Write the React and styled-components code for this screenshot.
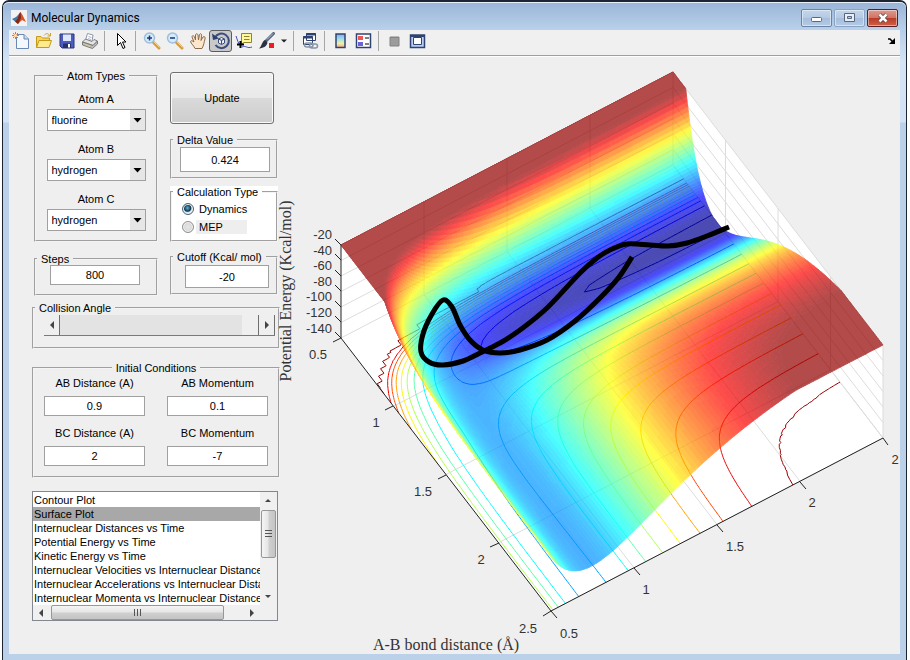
import { useState } from 'react'
import styled, { createGlobalStyle } from 'styled-components'

const GlobalS = createGlobalStyle`
    * { box-sizing: border-box; }
    body {
        margin: 0;
        background: #ffffff;
        font-family: "Liberation Sans", Arial, sans-serif;
        font-size: 11px;
        line-height: 12px;
        color: #000000;
    }
    button, input, select { font: inherit; color: inherit; margin: 0; padding: 0; }
`

/* ---------- window ---------- */

const WindowS = styled.div`
    display: flex;
    flex-direction: column;
    min-height: 100vh;
    margin: 0 3px 0 2px;
    padding: 0 6px 6px;
    background: linear-gradient(180deg, #9ab5d8 0, #b8cfe9 30px, #d5e4f5 60px, #d3e2f4 120px, #bbd0e9 121px);
    border: solid #1c2431;
    border-width: 2px 1px 0 1px;
    border-radius: 7px 7px 0 0;
`
const TitleBarS = styled.header`
    display: flex;
    align-items: center;
    height: 28px;
    margin: 0 -6px;
    padding: 5px 8px 3px 8px;
    background: linear-gradient(180deg, #9ab5d8, #b9d1ea);
    border-radius: 6px 6px 0 0;
    border-top: 1px solid #e8f0fa;
`
const TitleS = styled.h1`
    flex: 1;
    margin: 0 0 0 4px;
    font: 400 12px/16px Roboto, "Open Sans", sans-serif;
`
const CaptionButtonS = styled.button`
    display: flex;
    align-items: center;
    justify-content: center;
    width: 31px;
    height: 18px;
    margin-left: 2px;
    border: 1px solid ${ p => p.$close ? '#5a1f22' : p.$pale ? '#8ba3c4' : '#6b84a6' };
    border-radius: 2px;
    box-shadow: inset 0 0 0 1px rgba(255, 255, 255, .45);
    background: ${ p => p.$close
        ? 'linear-gradient(180deg, #dd9a8e 0, #d07465 48%, #b93a26 50%, #cf6146 100%)'
        : 'linear-gradient(180deg, #c3d5ea 0, #b5cae4 48%, #a5bddb 50%, #b4cbe6 100%)' };
`

/* ---------- toolbar ---------- */

const ToolBarS = styled.div`
    display: flex;
    align-items: center;
    height: 26px;
    padding: 0 2px 3px 0;
    background: #f0f0f0;
    border-bottom: 1px solid #a0a0a0;
`
const ToolS = styled.button`
    display: flex;
    align-items: center;
    justify-content: center;
    width: ${ p => p.$narrow ? '12px' : '23px' };
    height: 22px;
    border: 1px solid ${ p => p.$on ? '#5c5c5c' : 'transparent' };
    border-radius: 3px;
    background: ${ p => p.$on ? '#c9c9c9' : 'none' };
    svg { flex: none; }
`
const DividerS = styled.span`
    width: 1px;
    height: 20px;
    margin: 0 4px 0 3px;
    background: #a6a6a6;
`
const SpacerS = styled.span`
    flex: 1;
`

/* ---------- controls ---------- */

const FigureS = styled.main`
    display: flex;
    flex: 1;
    align-items: flex-start;
    background: #efefef;
    border-top: 1px solid #ffffff;
`
const SideS = styled.div`
    flex: none;
    width: 271px;
    padding: 13px 0 0 23px;
`
const ColumnsS = styled.div`
    display: grid;
    grid-template-columns: 124px 108px;
    column-gap: 12px;
    margin: 0 0 6px 2px;
`
const StackS = styled.div`
    display: flex;
    flex-direction: column;
    padding-top: ${ p => p.$top || 0 }px;
`
const GroupS = styled.fieldset`
    min-width: 0;
    margin: 0;
    padding: 0;
    border: 2px groove #f4f4f4;
`
const GroupWrapS = styled.div`
    margin-bottom: ${ p => p.$after || 0 }px;
    background: ${ p => p.$white ? '#ffffff' : 'none' };
`
const BodyS = styled.div`
    padding: ${ p => p.$pad };
`
const LegendS = styled.legend`
    margin: ${ p => p.$center ? '0 auto' : '0 0 0 1px' };
    padding: 0 4px;
    line-height: 12px;
    white-space: nowrap;
`
const UpdateS = styled.button`
    width: 104px;
    height: 52px;
    margin-bottom: 10px;
    border: 1px solid #707070;
    border-radius: 3px;
    box-shadow: inset 0 0 0 1px #fafafa;
    background: linear-gradient(180deg, #f1f1f1 0, #e9e9e9 49%, #dadada 50%, #cdcdcd 100%);
`
const BoxS = styled.input`
    display: block;
    width: ${ p => p.$width || 100 }px;
    height: ${ p => p.$height || 20 }px;
    border: 1px solid #a0a0a0;
    background: #ffffff;
    text-align: center;
`
const PicksS = styled.div`
    display: grid;
    gap: 12px;
`
const PickS = styled.label`
    text-align: center;
    span { display: block; margin-bottom: 4px; }
`
const SelectWrapS = styled.div`
    position: relative;
    width: 99px;
    margin: 0 auto;
    svg {
        position: absolute;
        right: 1px;
        top: 1px;
        pointer-events: none;
    }
`
const SelectS = styled.select`
    display: block;
    width: 100%;
    height: 22px;
    padding-left: 4px;
    appearance: none;
    border: 1px solid #a0a0a0;
    border-radius: 0;
    background: #ffffff;
`
const RadioS = styled.label`
    display: flex;
    align-items: center;
    height: 18px;
    input {
        appearance: none;
        width: 12px;
        height: 12px;
        margin-right: 2px;
        border: 1px solid #8e8f8f;
        border-radius: 50%;
        background: radial-gradient(#e6e6e6, #cfcfcf);
        box-shadow: inset 0 0 0 1px #f4f4f4;
    }
    input:checked {
        border-color: #4a6478;
        background: radial-gradient(circle at 45% 40%, #58b9dc 0, #12334d 40%, #d8e4ec 55%);
    }
    span {
        width: 51px;
        padding: 1px 3px;
        background: ${ p => p.$shade ? '#eeeeee' : 'none' };
    }
`
const SliderS = styled.div`
    display: flex;
    width: 231px;
    height: 21px;
    border-bottom: 1px solid #7a7a7a;
    background: #e3e3e3;
    input {
        flex: 1;
        min-width: 0;
        appearance: none;
        background: none;
    }
    input::-webkit-slider-thumb {
        appearance: none;
        width: 17px;
        height: 20px;
        border: solid #6f6f6f;
        border-width: 0 1px 0 0;
        background: #efefef;
    }
`
const SliderButtonS = styled.button`
    display: flex;
    align-items: center;
    justify-content: center;
    width: 16px;
    border: solid #6f6f6f;
    border-width: 0 1px 0 0;
    background: #efefef;
`
const FieldsS = styled.div`
    display: grid;
    grid-template-columns: 101px 101px;
    gap: 11px 22px;
    label { text-align: center; }
    label > span { display: block; margin-bottom: 7px; }
    input { width: 100%; }
`

/* ---------- list ---------- */

const ListBoxS = styled.div`
    display: grid;
    grid-template-columns: 1fr 17px;
    grid-template-rows: 113px 15px;
    width: 246px;
    border: 1px solid #828790;
    background: #f0f0f0;
`
const ListS = styled.ul`
    margin: 0;
    padding: 1px 0 0;
    list-style: none;
    overflow: hidden;
    background: #ffffff;
`
const ItemS = styled.li`
    height: 14px;
    padding-left: 1px;
    line-height: 14px;
    white-space: nowrap;
    background: ${ p => p.$on ? '#a8a8a8' : 'none' };
`
const ScrollS = styled.div`
    display: flex;
    flex-direction: ${ p => p.$vertical ? 'column' : 'row' };
    button {
        display: flex;
        flex: none;
        align-items: center;
        justify-content: center;
        border: 0;
        background: none;
        width: 16px;
        height: 16px;
    }
`
const ThumbS = styled.span`
    display: flex;
    align-items: center;
    justify-content: center;
    border: 1px solid #979797;
    border-radius: 2px;
    margin: ${ p => p.$vertical ? '2px 0 auto 1px' : '0 auto 0 2px' };
    width: ${ p => p.$vertical ? '15px' : '173px' };
    height: ${ p => p.$vertical ? '48px' : '15px' };
    background: linear-gradient(${ p => p.$vertical ? '90deg' : '180deg' }, #f5f5f5 0, #e6e6e6 45%, #cfcfcf 55%, #c4c4c4 100%);
`
const PlotS = styled.svg`
    display: block;
    flex: 1;
    min-width: 0;
    height: auto;
    overflow: visible;
    font: 13px "Liberation Sans", Arial, sans-serif;
    fill: #333333;
    .latex { font: 16px "Liberation Serif", "Times New Roman", serif; }
`

/* ---------- LEPS potential, collinear F-H-H ---------- */

const HF = { d: 141.2, b: 2.2187, r: 0.917, s: 0.167 }
const HH = { d: 109.45, b: 1.942, r: 0.742, s: 0.106 }
const V_MIN = -140
const V_MAX = -20

const terms = ({ d, b, r, s }, dist) => {
    const e = Math.exp(-b * (dist - r))
    const k = d / 4 / (1 + s)
    return [k * ((3 + s) * e * e - (2 + 6 * s) * e), k * ((1 + 3 * s) * e * e - (6 + 2 * s) * e)]
}
const energy = (bc, ab) => {
    const [q1, j1] = terms(HF, ab)
    const [q2, j2] = terms(HH, bc)
    const [q3, j3] = terms(HF, ab + bc)
    const mix = ((j1 - j2) ** 2 + (j2 - j3) ** 2 + (j3 - j1) ** 2) / 2
    return Math.min(V_MAX, q1 + q2 + q3 - Math.sqrt(mix))
}
// u runs along B-C, v along A-B, both 0..1 for 0.5..2.5
const heightAt = (u, v) => Math.max(0, (energy(0.5 + 2 * u, 0.5 + 2 * v) - V_MIN) / (V_MAX - V_MIN))
const project = (u, v, h = 0) => [341 + 332 * u + 210 * v, 338 - 173 * u + 273 * v - 93 * h]

const pt = ([x, y]) => `${ x.toFixed(1) } ${ y.toFixed(1) }`
const line = (...points) => 'M' + points.map(pt).join('L')

const jet = t => {
    const k = 0.02 + 0.96 * t
    const ch = c => Math.round(255 * Math.max(0, Math.min(1, 1.5 - Math.abs(4 * k - c))))
    return `rgb(${ ch(3) },${ ch(2) },${ ch(1) })`
}

// the walls are steep at short distances, so the mesh is finer there
const buildSurface = (nu, nv, shades) => {
    const grid = []
    for (let i = 0; i <= nu; i++) {
        grid.push([])
        for (let j = 0; j <= nv; j++) {
            const u = (i / nu) ** 1.5
            const v = (j / nv) ** 1.6
            const h = heightAt(u, v)
            grid[i].push({ h, p: pt(project(u, v, h)) })
        }
    }
    const paths = Array(shades + 1).fill('')
    for (let i = 0; i < nu; i++) {
        for (let j = 0; j < nv; j++) {
            const q = [grid[i][j], grid[i + 1][j], grid[i + 1][j + 1], grid[i][j + 1]]
            const mean = q.reduce((sum, c) => sum + c.h, 0) / 4
            paths[Math.round(mean * shades)] += `M${ q.map(c => c.p).join('L') }Z`
        }
    }
    return paths.map((d, k) => ({ d, color: jet(k / shades) })).filter(b => b.d)
}

// marching over triangles, drawn on the floor of the box
const buildContour = (level, n) => {
    let d = ''
    const cross = (a, b) => {
        if ((a[2] < level) === (b[2] < level)) return null
        const k = (level - a[2]) / (b[2] - a[2])
        return project(a[0] + k * (b[0] - a[0]), a[1] + k * (b[1] - a[1]))
    }
    const at = (i, j) => [i / n, j / n, heightAt(i / n, j / n)]
    for (let i = 0; i < n; i++) {
        for (let j = 0; j < n; j++) {
            const [a, b, c, e] = [at(i, j), at(i + 1, j), at(i + 1, j + 1), at(i, j + 1)]
            for (const [p, q, r] of [[a, b, c], [a, c, e]]) {
                const hits = [cross(p, q), cross(q, r), cross(r, p)].filter(Boolean)
                if (hits.length === 2) d += line(...hits)
            }
        }
    }
    return d
}

const surface = buildSurface(110, 210, 160)
const contours = Array.from({ length: 12 }, (_, k) => {
    const level = 0.996 - k * 0.0896
    return { d: buildContour(level, k === 0 ? 60 : 90), color: jet(level) }
})

const quarters = [0.25, 0.5, 0.75, 1]
const gridLines = [
    ...quarters.map(u => line(project(u, 1), project(u, 0), project(u, 0, 1))),
    ...quarters.map(v => line(project(0, v), project(1, v), project(1, v, 1))),
    ...[0, 1, 2, 3, 4, 5, 6].map(k => line(project(0, 0, k / 6), project(1, 0, k / 6), project(1, 1, k / 6))),
].join('')

const smooth = pts => pts.slice(1).reduce((d, p, i) => {
    const a = pts[Math.max(0, i - 1)], b = pts[i], c = pts[Math.min(pts.length - 1, i + 2)]
    const c1 = [b[0] + (p[0] - a[0]) / 6, b[1] + (p[1] - a[1]) / 6]
    const c2 = [p[0] - (c[0] - b[0]) / 6, p[1] - (c[1] - b[1]) / 6]
    return d + `C${ pt(c1) } ${ pt(c2) } ${ pt(p) }`
}, 'M' + pt(pts[0]))

const trajectory = smooth([
    [729, 227], [707, 236], [687, 243], [668, 246], [650, 245], [627, 244], [610, 250], [597, 258],
    [580, 273], [547, 308], [520, 330], [500, 343], [480, 353], [463, 361], [443, 365], [429, 362],
    [421, 352], [423, 334], [432, 314], [443, 300], [452, 307], [460, 325], [470, 340], [483, 350],
    [500, 353], [520, 350], [547, 340], [575, 321], [601, 297], [619, 277], [632, 257],
])

const energyTicks = [-20, -40, -60, -80, -100, -120, -140]

const SurfacePlot = () => (
    <PlotS viewBox='280 57 620 597' role='img' aria-label='Potential energy surface'>
        <path d='M341 245L673 72L883 345V438L551 611L341 338Z' fill='#ffffff' />
        <path d={ gridLines } fill='none' stroke='#dcdcdc' />
        {
            contours.map(c => <path key={ c.color } d={ c.d } fill='none' stroke={ c.color } />)
        }
        <g opacity='.7'>
            {
                surface.map(b =>
                    <path key={ b.color } d={ b.d } fill={ b.color } stroke={ b.color } strokeWidth='.8' />
                )
            }
        </g>
        <path
            d='M341 245V338L551 611L883 438M335 239L341 245M335 254L341 260M335 270L341 276M335 285L341 291M335 301L341 307M335 316L341 322M335 332L341 338M333 342L341 338M385 410L393 406M438 479L446 475M490 547L499 543M543 616L551 611L557 618M634 568L640 575M717 525L723 532M800 482L806 489M883 438L888 445'
            fill='none' stroke='#222222'
        />
        <path d={ trajectory } fill='none' stroke='#000000' strokeWidth='5' />
        {
            energyTicks.map((value, i) =>
                <text key={ value } x='332' y={ Math.round(239 + i * 15.6) } textAnchor='end'>{ value }</text>
            )
        }
        <g textAnchor='middle'>
            <text x='318' y='359'>0.5</text>
            <text x='376' y='427'>1</text>
            <text x='423' y='496'>1.5</text>
            <text x='481' y='564'>2</text>
            <text x='528' y='633'>2.5</text>
            <text x='569' y='638'>0.5</text>
            <text x='646' y='594'>1</text>
            <text x='735' y='551'>1.5</text>
            <text x='812' y='507'>2</text>
            <text x='895' y='464'>2</text>
            <text className='latex' x='446' y='650'>A-B bond distance (Å)</text>
            <text className='latex' transform='translate(291 291) rotate(-90)'>Potential Energy (Kcal/mol)</text>
        </g>
    </PlotS>
)

/* ---------- toolbar icons ---------- */

const Icon = ({ children, size = 18 }) => (
    <svg width={ size } height={ size } viewBox={ `0 0 ${ size } ${ size }` } fill='none' aria-hidden='true'>{ children }</svg>
)

const Lens = ({ plus }) => (
    <Icon>
        <path d='M10.500 10.500L16 16' stroke='#d79a3c' strokeWidth='3' strokeLinecap='round' />
        <path d='M11 10L16.500 15.500' stroke='#f2cf84' />
        <circle cx='6.500' cy='6' r='5' fill='#d3ecf8' stroke='#9dbfde' strokeWidth='1.500' />
        <path d={ plus ? 'M4 6H9M6.500 3.500V8.500' : 'M4 6H9' } stroke='#20357c' strokeWidth='1.500' />
    </Icon>
)

const icons = {
    new: <Icon>
        <path d='M4.500 2.500H12L16.500 7V16.500H4.500Z' fill='#f3f8fe' stroke='#6c88b4' />
        <path d='M12 2.500V7H16.500' fill='#c9d9ef' stroke='#6c88b4' />
        <path d='M3.500 0V7M0 3.500H7M1 1L6 6M6 1L1 6' stroke='#e0714b' />
        <circle cx='3.500' cy='3.500' r='1.500' fill='#ffe9a8' />
    </Icon>,
    open: <Icon>
        <path d='M1.500 15.500V4.500H6L7.500 6H14.500V9' fill='#f6d35b' stroke='#c29a1c' />
        <path d='M1.500 15.500L4 8.500H16.500L14 15.500Z' fill='#ffeb8c' stroke='#c29a1c' />
        <path d='M9 3.500C11 1 13.500 1 14.500 3.500M15.500 1V4H12.500' stroke='#c7a12e' />
    </Icon>,
    save: <Icon>
        <path d='M2 2H16V16H4L2 14Z' fill='#4c5cc0' stroke='#2c3478' />
        <path d='M5 2.500H13V9H5Z' fill='#dfe8fa' />
        <path d='M5 11.500H13V16H5Z' fill='#28306c' />
        <path d='M10 12H12V15.500H10Z' fill='#ffffff' />
    </Icon>,
    print: <Icon>
        <path d='M4.500 8L6.500 1.500L12 3L11 9.500Z' fill='#ffffff' stroke='#8f98a8' />
        <path d='M7.500 4.500L10.500 5.500M7 6.500L10 7.500' stroke='#a9b4c6' />
        <path d='M1.500 10L4.500 7L11 9.500L13 7.500L16.500 9L12 13.500Z' fill='#e4e4e4' stroke='#7e7e7e' />
        <path d='M1.500 10V13L11.500 16.500L16.500 12V9L12 13.500Z' fill='#bdbdbd' stroke='#7a7a7a' />
        <path d='M4 12.500L9 14.500' stroke='#e8cd55' />
    </Icon>,
    pointer: <Icon>
        <path d='M5.500 1.500V13.500L8.500 10.500L11 16.500L13 15.500L10.500 10H14Z' fill='#ffffff' stroke='#000000' />
    </Icon>,
    zoomIn: <Lens plus />,
    zoomOut: <Lens />,
    pan: <Icon>
        <path d='M6 16.500C5 14 2 11.500 1.500 9.500C2 8 4 9 5 10L3 5C3 3 5 3.500 5.500 5L6.500 8L6.500 3C7 1 8.500 1.500 9 3L9.500 8L10.500 2.500C11.500 1 13 2 12.500 4L12 8.500L14 5C15.500 4 16.500 5 16 7C15 10 15 13 13 16.500Z' fill='#fde6cb' stroke='#8c6a4c' />
    </Icon>,
    rotate: <Icon>
        <path d='M3 5.500A7.300 7.300 0 1 1 3.500 13' stroke='#3b4d7c' strokeWidth='2' />
        <path d='M0 1.500L1 8L7 6.500Z' fill='#2e4270' />
        <path d='M6.500 7L9.500 5.500L12.500 7V11L9.500 12.500L6.500 11ZM6.500 7L9.500 8.500L12.500 7M9.500 8.500V12' fill='#eef1f7' stroke='#3b4d7c' />
    </Icon>,
    cursor: <Icon>
        <path d='M1 4C2.500 8 3 11 5 13M7 15C11 13 12 17 17 15' stroke='#3e4ec0' />
        <path d='M6.500 1.500H16.500V10.500H9L6.500 12Z' fill='#fff79a' stroke='#8c8232' />
        <path d='M9 4.500H14.500M9 7.500H14.500' stroke='#8c8232' />
        <path d='M5.500 9V16M2 12.500H9' stroke='#000000' strokeWidth='2' />
    </Icon>,
    brush: <Icon>
        <path d='M15.500 1.500L8 9' stroke='#56657f' strokeWidth='3' strokeLinecap='round' />
        <path d='M15 1.500L9 7.500' stroke='#b8c4d8' />
        <path d='M7 8L9.500 10.500C9 14 6 16 1 16.500C4 14 3.500 10 7 8Z' fill='#2b3140' />
        <path d='M11 11H16V16H11Z' fill='#ee1c1c' />
    </Icon>,
    caret: <Icon size={ 6 }><path d='M0 1.500H6L3 4.500Z' fill='#222222' /></Icon>,
    link: <Icon>
        <path d='M5.500 1.500H14.500V8.500H5.500ZM2.500 4.500H11.500V12.500H2.500Z' fill='#ffffff' stroke='#2f4373' />
        <path d='M5 2.500H15M2 5.500H12' stroke='#2f4373' strokeWidth='2' />
        <path d='M3.500 13A2.500 2 0 0 1 6 11H10A2 2 0 0 1 10 15H6A2.500 2 0 0 1 3.500 13ZM8.500 14A2.500 2 0 0 1 11 12H14.500A2 2 0 0 1 14.500 16H11A2.500 2 0 0 1 8.500 14Z' stroke='#8694a6' strokeWidth='1.500' />
    </Icon>,
    colorbar: <Icon>
        <defs>
            <linearGradient id='bar' x2='0' y2='1'>
                <stop offset='0' stopColor='#8aa9ee' />
                <stop offset='.4' stopColor='#9fe3e8' />
                <stop offset='.7' stopColor='#f6ee9e' />
                <stop offset='1' stopColor='#f2a88c' />
            </linearGradient>
        </defs>
        <path d='M4 2H13V15.500H4Z' fill='url(#bar)' stroke='#2f4373' strokeWidth='1.500' />
    </Icon>,
    legend: <Icon>
        <path d='M1.500 2H15.500V15.500H1.500Z' fill='#ffffff' stroke='#2f4373' strokeWidth='1.500' />
        <path d='M3 4H8V8H3Z' fill='#ee5555' />
        <path d='M3 10H8V14H3Z' fill='#6a62d8' />
        <path d='M10 6H14M10 12H14' stroke='#000000' />
    </Icon>,
    hide: <Icon>
        <path d='M4 5H13V14H4Z' fill='#9c9c9c' stroke='#828282' />
        <path d='M4 5.500H13' stroke='#858585' />
    </Icon>,
    show: <Icon>
        <path d='M1.500 3H15.500V15.500H1.500Z' fill='#b9cdf0' stroke='#2f4373' strokeWidth='1.500' />
        <path d='M1.500 4H15.500' stroke='#2f4373' strokeWidth='2' />
        <path d='M4.500 5.500H12.500V12.500H4.500Z' fill='#ffffff' stroke='#2f4373' />
    </Icon>,
    dock: <Icon size={ 8 }><path d='M0 2H2L5 5' stroke='#000000' strokeWidth='1.500' /><path d='M7 1V7H1Z' fill='#000000' /></Icon>,
}

const tools = [
    ['new', 'open', 'save', 'print'],
    ['pointer'],
    ['zoomIn', 'zoomOut', 'pan', 'rotate', 'cursor', 'brush', 'caret'],
    ['link'],
    ['colorbar', 'legend'],
    ['hide', 'show'],
]

const arrows = {
    up: 'M1 6L4 3L7 6Z', down: 'M1 2L4 5L7 2Z', left: 'M6 0V8L2 4Z', right: 'M2 0V8L6 4Z',
}
const Arrow = ({ to }) => <Icon size={ 8 }><path d={ arrows[to] } fill='#444444' /></Icon>

/* ---------- app ---------- */

const Group = ({ title, center, white, after, pad, children }) => (
    <GroupWrapS $after={ after } $white={ white }>
        <GroupS>
            <LegendS $center={ center }>{ title }</LegendS>
            <BodyS $pad={ pad }>{ children }</BodyS>
        </GroupS>
    </GroupWrapS>
)

const atoms = ['hydrogen', 'fluorine', 'chlorine']

const AtomPick = ({ name, value }) => (
    <PickS>
        <span>{ name }</span>
        <SelectWrapS>
            <SelectS defaultValue={ value }>
                { atoms.map( atom => <option key={ atom }>{ atom }</option> ) }
            </SelectS>
            <svg width='15' height='20' aria-hidden='true'>
                <rect width='15' height='20' fill='#e6e6e6' />
                <path d='M3.500 8H11.500L7.500 12.500Z' fill='#000000' />
            </svg>
        </SelectWrapS>
    </PickS>
)

const plots = [
    'Contour Plot',
    'Surface Plot',
    'Internuclear Distances vs Time',
    'Potential Energy vs Time',
    'Kinetic Energy vs Time',
    'Internuclear Velocities vs Internuclear Distance',
    'Internuclear Accelerations vs Internuclear Distance',
    'Internuclear Momenta vs Internuclear Distance',
]

const conditions = [
    ['AB Distance (A)', '0.9'], ['AB Momentum', '0.1'],
    ['BC Distance (A)', '2'], ['BC Momentum', '-7'],
]

const App = () => {
    const [plot, setPlot] = useState('Surface Plot')
    return(
        <>
            <GlobalS />
            <WindowS>
                <TitleBarS>
                    <svg width='16' height='16' viewBox='0 0 16 16' aria-hidden='true'>
                        <path d='M0 0H16V16H0Z' fill='#f2f2f2' />
                        <path d='M1 9L5 7L8 4L7 10L4 11.500Z' fill='#3f78ac' />
                        <path d='M8 4L9.500 2L11.500 5L15 12L11 10L7 14L4 11.500L6.500 9Z' fill='#d9542a' />
                        <path d='M8 4L9.500 2L10 8L7 14L4 11.500L6.500 9Z' fill='#7c2a1c' />
                    </svg>
                    <TitleS>Molecular Dynamics</TitleS>
                    <CaptionButtonS aria-label='Minimize'>
                        <svg width='13' height='8'><rect x='1.500' y='3.500' width='10' height='4' rx='1' fill='#ffffff' stroke='#566780' /></svg>
                    </CaptionButtonS>
                    <CaptionButtonS aria-label='Maximize' $pale>
                        <svg width='11' height='9'><path d='M.5 .5H10.500V8.500H.5ZM3.500 3.500V5.500H7.500V3.500Z' fill='#e8eef6' fillRule='evenodd' stroke='#566780' /></svg>
                    </CaptionButtonS>
                    <CaptionButtonS aria-label='Close' $close>
                        <svg width='12' height='10'><path d='M2.500 1.500L9.500 8.500M9.500 1.500L2.500 8.500' stroke='#5c4040' strokeWidth='4' /><path d='M2.500 1.500L9.500 8.500M9.500 1.500L2.500 8.500' stroke='#ffffff' strokeWidth='2.500' /></svg>
                    </CaptionButtonS>
                </TitleBarS>
                <ToolBarS role='toolbar'>
                    {
                        tools.map( (group, i) => [
                            i > 0 && <DividerS key={ 'divider' + i } />,
                            ...group.map( name =>
                                <ToolS key={ name } aria-label={ name } $on={ name === 'rotate' } $narrow={ name === 'caret' } >
                                    { icons[name] }
                                </ToolS>
                            )
                        ])
                    }
                    <SpacerS />
                    <ToolS aria-label='dock' $narrow>{ icons.dock }</ToolS>
                </ToolBarS>
                <FigureS>
                    <SideS>
                        <ColumnsS>
                            <StackS>
                                <Group title='Atom Types' center after={ 11 } pad='11px 0 9px'>
                                    <PicksS>
                                        <AtomPick name='Atom A' value='fluorine' />
                                        <AtomPick name='Atom B' value='hydrogen' />
                                        <AtomPick name='Atom C' value='hydrogen' />
                                    </PicksS>
                                </Group>
                                <Group title='Steps' pad='0 0 9px 14px'>
                                    <BoxS aria-label='Steps' defaultValue='800' $width={ 90 } />
                                </Group>
                            </StackS>
                            <StackS $top={ 2 }>
                                <UpdateS>Update</UpdateS>
                                <Group title='Delta Value' after={ 7 } pad='1px 0 5px 8px'>
                                    <BoxS aria-label='Delta Value' defaultValue='0.424' $width={ 90 } $height={ 25 } />
                                </Group>
                                <Group title='Calculation Type' white after={ 9 } pad='2px 0 4px 10px'>
                                    <RadioS>
                                        <input type='radio' name='calc' defaultChecked />
                                        <span>Dynamics</span>
                                    </RadioS>
                                    <RadioS $shade>
                                        <input type='radio' name='calc' />
                                        <span>MEP</span>
                                    </RadioS>
                                </Group>
                                <Group title='Cutoff (Kcal/ mol)' pad='2px 0 5px 13px'>
                                    <BoxS aria-label='Cutoff (Kcal/ mol)' defaultValue='-20' $width={ 84 } $height={ 23 } />
                                </Group>
                            </StackS>
                        </ColumnsS>
                        <Group title='Collision Angle' after={ 13 } pad='1px 0 11px 10px'>
                            <SliderS>
                                <SliderButtonS aria-label='Decrease'><Arrow to='left' /></SliderButtonS>
                                <input type='range' aria-label='Collision Angle' min='0' max='180' defaultValue='180' />
                                <SliderButtonS aria-label='Increase'><Arrow to='right' /></SliderButtonS>
                            </SliderS>
                        </Group>
                        <Group title='Initial Conditions' center after={ 13 } pad='3px 0 10px 10px'>
                            <FieldsS>
                                {
                                    conditions.map( ([name, value]) =>
                                        <label key={ name }>
                                            <span>{ name }</span>
                                            <BoxS defaultValue={ value } />
                                        </label>
                                    )
                                }
                            </FieldsS>
                        </Group>
                        <ListBoxS>
                            <ListS role='listbox' aria-label='Plot'>
                                {
                                    plots.map( name =>
                                        <ItemS key={ name } role='option' aria-selected={ name === plot } $on={ name === plot } onClick={ () => setPlot(name) } >
                                            { name }
                                        </ItemS>
                                    )
                                }
                            </ListS>
                            <ScrollS $vertical>
                                <button aria-label='Scroll up'><Arrow to='up' /></button>
                                <ThumbS $vertical>
                                    <svg width='7' height='8'><path d='M0 .5H7M0 3.500H7M0 6.500H7' stroke='#555555' /></svg>
                                </ThumbS>
                                <button aria-label='Scroll down'><Arrow to='down' /></button>
                            </ScrollS>
                            <ScrollS>
                                <button aria-label='Scroll left'><Arrow to='left' /></button>
                                <ThumbS>
                                    <svg width='8' height='7'><path d='M.5 0V7M3.500 0V7M6.500 0V7' stroke='#555555' /></svg>
                                </ThumbS>
                                <button aria-label='Scroll right'><Arrow to='right' /></button>
                            </ScrollS>
                        </ListBoxS>
                    </SideS>
                    <SurfacePlot />
                </FigureS>
            </WindowS>
        </>
    )
}
export default App
